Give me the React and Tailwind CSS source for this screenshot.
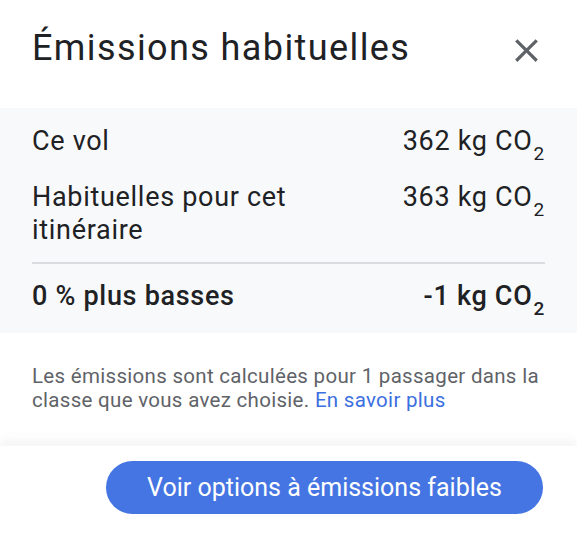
import React from 'react';

const rows = [
  { label: 'Ce vol', value: '362 kg' },
  { label: 'Habituelles pour cet itinéraire', value: '363 kg' },
];

const Co2 = ({ value }) => (
  <span className="whitespace-nowrap">
    {value} CO<sub className="text-[19px] align-[-5px] ml-[1px]">2</sub>
  </span>
);

const CloseIcon = () => (
  <svg viewBox="0 0 24 24" className="h-[39px] w-[39px] fill-[#5f6368]">
    <path d="M19 6.41L17.59 5 12 10.59 6.41 5 5 6.41 10.59 12 5 17.59 6.41 19 12 13.41 17.59 19 19 17.59 13.41 12z" />
  </svg>
);

export default function App() {
  return (
    <div className="w-[577px] h-[557px] bg-white font-['Roboto',sans-serif] text-[#202124] overflow-hidden">
      {/* Header */}
      <div className="h-[108px] flex items-start justify-between pl-[32px] pr-[31px] pt-[24px]">
        <h2 className="text-[36px] leading-[48px] tracking-[1.4px] text-[#202124]">Émissions habituelles</h2>
        <button className="mt-[7px]">
          <CloseIcon />
        </button>
      </div>

      {/* Emissions table */}
      <div className="bg-[#f8f9fa] px-[32px] pt-[17px] pb-[20px]">
        <div className="flex flex-col gap-[23px]">
          {rows.map((row) => (
            <div key={row.label} className="flex justify-between items-start text-[27px] leading-[33px] tracking-[0.7px]">
              <span className="w-[300px]">{row.label}</span>
              <Co2 value={row.value} />
            </div>
          ))}
        </div>
        <div className="h-[2px] bg-[#dadce0] mt-[15px] mb-[16px]" />
        <div className="flex justify-between items-start text-[27px] leading-[33px] tracking-[0.7px] font-medium">
          <span>0 % plus basses</span>
          <Co2 value="-1 kg" />
        </div>
      </div>

      {/* Disclaimer */}
      <p className="pl-[32px] pr-[30px] pt-[31px] pb-[34px] text-[20.5px] leading-[24px] tracking-[0.3px] text-[#5f6368]">
        Les émissions sont calculées pour 1 passager dans la classe que vous avez choisie.{' '}
        <a className="text-[#3c6fe0]">En savoir plus</a>
      </p>

      {/* Footer */}
      <div className="relative bg-white shadow-[0_-6px_10px_rgba(60,64,67,0.06)] flex justify-end pr-[34px] pt-[15px]">
        <button className="h-[53px] w-[437px] rounded-full bg-[#4575e2] text-white text-[25px]">
          Voir options à émissions faibles
        </button>
      </div>
    </div>
  );
}
